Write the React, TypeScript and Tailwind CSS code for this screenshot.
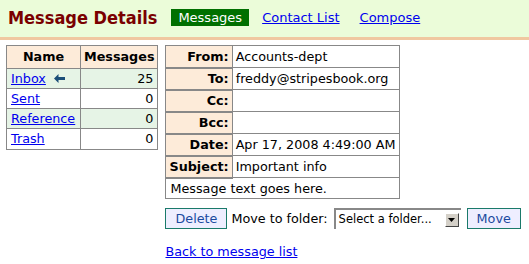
const folders = [
  { name: "Inbox", count: 25, current: true },
  { name: "Sent", count: 0 },
  { name: "Reference", count: 0 },
  { name: "Trash", count: 0 },
];

const fields = [
  { label: "From:", value: "Accounts-dept" },
  { label: "To:", value: "freddy@stripesbook.org" },
  { label: "Cc:", value: "" },
  { label: "Bcc:", value: "" },
  { label: "Date:", value: "Apr 17, 2008 4:49:00 AM" },
  { label: "Subject:", value: "Important info" },
];

function BackArrow() {
  return (
    <svg width="11" height="9" viewBox="0 0 11 9" className="inline-block ml-[8px] align-[0px]">
      <path d="M0 4.5L4.5 0v3H11v3H4.5v3z" fill="#1b4e78" />
    </svg>
  );
}

export default function App() {
  return (
    <div className="w-[529px] h-[264px] bg-white text-[12.75px] text-black font-['DejaVu_Sans',sans-serif] overflow-hidden">
      <div className="h-[40px] bg-[#ebfcd9] border-b-[3px] border-[#f0c8a0] flex items-center pl-2 pb-[2px]">
        <h1 className="text-[18px] font-bold text-[#7a0000] mr-[14px] font-['DejaVu_Sans_Condensed',sans-serif]">Message Details</h1>
        <span className="bg-[#007000] text-white px-[7px] leading-[17px] mr-[13px] text-[13px]">Messages</span>
        <a href="#" className="text-[#0000ee] underline mr-[20px] text-[13px]">Contact List</a>
        <a href="#" className="text-[#0000ee] underline text-[13px]">Compose</a>
      </div>

      <div className="flex items-start gap-[7px] pl-[6px] pt-[5px]">
        <table className="border border-[#888] border-collapse shrink-0">
          <thead>
            <tr className="bg-[#fdebd9]">
              <th className="border border-[#888] px-[3px] h-[23px] w-[74px]">Name</th>
              <th className="border border-[#888] px-[3px] h-[23px] w-[77px]">Messages</th>
            </tr>
          </thead>
          <tbody>
            {folders.map((f, i) => (
              <tr key={f.name} className={i % 2 === 0 ? "bg-[#e6f4e6]" : "bg-white"}>
                <td className="border border-[#888] px-[4px] h-[20px] whitespace-nowrap">
                  <a href="#" className="text-[#0000ee] underline">{f.name}</a>
                  {f.current && <BackArrow />}
                </td>
                <td className="border border-[#888] px-[4px] text-right">{f.count}</td>
              </tr>
            ))}
          </tbody>
        </table>

        <div className="flex flex-col shrink-0">
          <table className="border border-[#888] border-collapse w-[233px]">
            <tbody>
              {fields.map((f) => (
                <tr key={f.label}>
                  <th className="bg-[#fdebd9] border border-[#888] border-b-2 text-right pl-[3px] pr-[3px] h-[22px] w-[68px] whitespace-nowrap">{f.label}</th>
                  <td className="border border-[#888] px-[3px] whitespace-nowrap">{f.value}</td>
                </tr>
              ))}
              <tr>
                <td colSpan={2} className="border border-[#888] px-[4px] h-[21px]">Message text goes here.</td>
              </tr>
            </tbody>
          </table>

          <div className="flex items-center mt-[9px] w-max whitespace-nowrap">
            <button className="bg-[#eeeeff] border border-[#1a7a6a] text-[#1a4aa0] px-[9px] h-[21px] leading-[19px]">Delete</button>
            <span className="ml-[4px]">Move to folder:</span>
            <div className="ml-[6px] flex items-center h-[21px] w-[127px] border-t-2 border-l-2 border-[#888] bg-white text-[11.5px] pl-[3px]">
              <span className="flex-1">Select a folder...</span>
              <span className="w-[14px] h-[14px] bg-[#d4d0c8] border border-b-[#444] border-r-[#444] border-t-white border-l-white flex items-center justify-center mr-[2px]">
                <svg width="7" height="4" viewBox="0 0 7 4"><path d="M0 0h7L3.5 4z" fill="#000" /></svg>
              </span>
            </div>
            <button className="ml-[6px] bg-[#eeeeff] border border-[#1a7a6a] text-[#1a4aa0] px-[9px] h-[21px] leading-[19px]">Move</button>
          </div>

          <a href="#" className="block mt-[13px] text-[#0000ee] underline w-max">Back to message list</a>
        </div>
      </div>
    </div>
  );
}
